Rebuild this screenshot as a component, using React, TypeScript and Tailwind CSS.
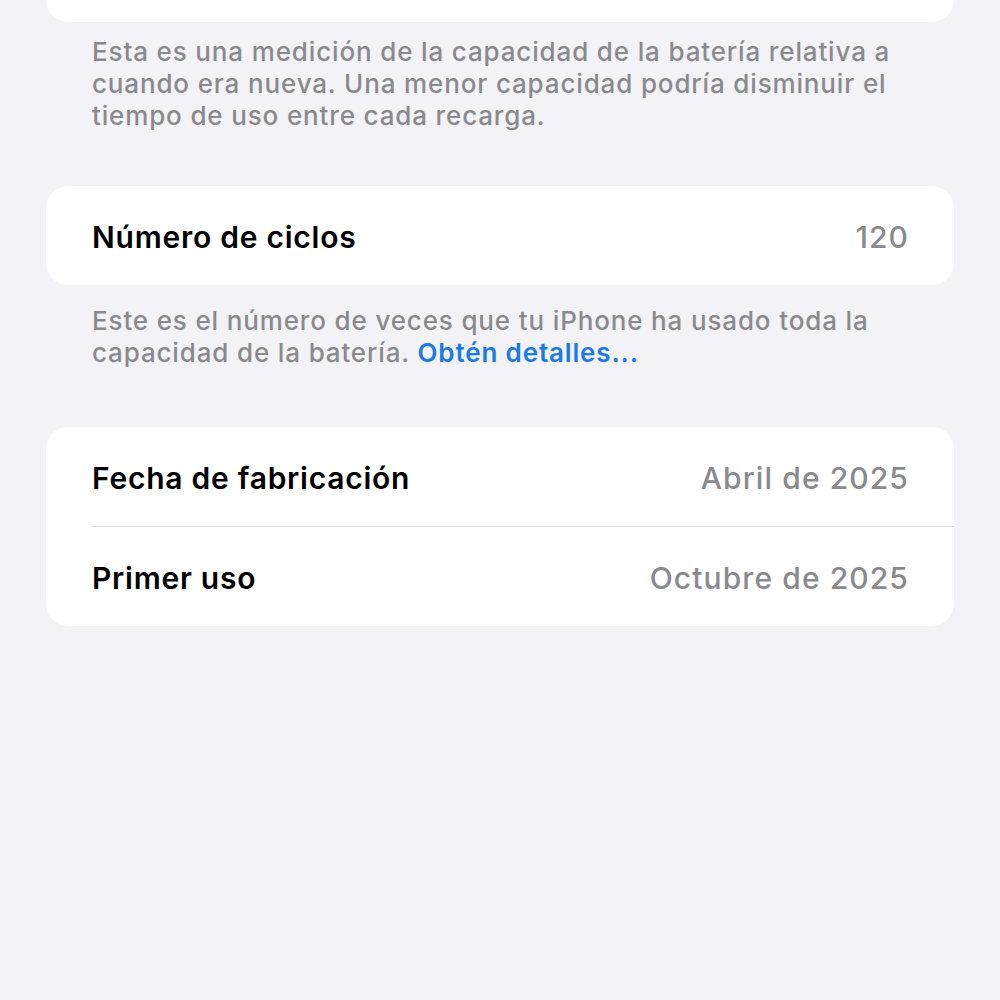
import React from 'react'

const font = { fontFamily: 'Inter, "Noto Sans", sans-serif' }

interface IRow {
  id: string;
  label: string;
  value: string;
}

const dates: IRow[] = [
  { id: "1", label: "Fecha de fabricación", value: "Abril de 2025" },
  { id: "2", label: "Primer uso", value: "Octubre de 2025" },
]

const Row = ({ label, value }: { label: string; value: string }) => (
  <div className="flex items-center justify-between h-[99px] pt-[4px] pr-[45px]">
    <p className="text-[30px] font-semibold text-black tracking-[0.75px]">{label}</p>
    <p className="text-[30px] font-medium text-[#8a8a8e] tracking-[1.1px]">{value}</p>
  </div>
)

const App = () => {
  return (
    <div style={font} className="min-h-[1000px] w-[1000px] bg-[#f2f2f7] px-[46px]">
      <div className="h-[22px] bg-white rounded-b-[22px]" />

      <p className="pt-[14px] pl-[46px] text-[26px] leading-[32px] font-medium text-[#8a8a8e] tracking-[0.85px] whitespace-nowrap">
        Esta es una medición de la capacidad de la batería relativa a<br />
        cuando era nueva. Una menor capacidad podría disminuir el<br />
        tiempo de uso entre cada recarga.
      </p>

      <div className="mt-[54px] bg-white rounded-[22px] pl-[46px]">
        <Row label="Número de ciclos" value="120" />
      </div>

      <p className="pt-[20px] pl-[46px] text-[26px] leading-[32px] font-medium text-[#8a8a8e] tracking-[0.85px] whitespace-nowrap">
        Este es el número de veces que tu iPhone ha usado toda la<br />
        capacidad de la batería.{" "}
        <span className="text-[#1a7ae6] font-semibold">Obtén detalles...</span>
      </p>

      <div className="mt-[58px] bg-white rounded-[22px] pl-[46px]">
        {dates.map((item: IRow, i: number) => (
          <React.Fragment key={item.id}>
            {i > 0 && <div className="h-px bg-[#d9d9dd]" />}
            <Row label={item.label} value={item.value} />
          </React.Fragment>
        ))}
      </div>
    </div>
  )
}

export default App
